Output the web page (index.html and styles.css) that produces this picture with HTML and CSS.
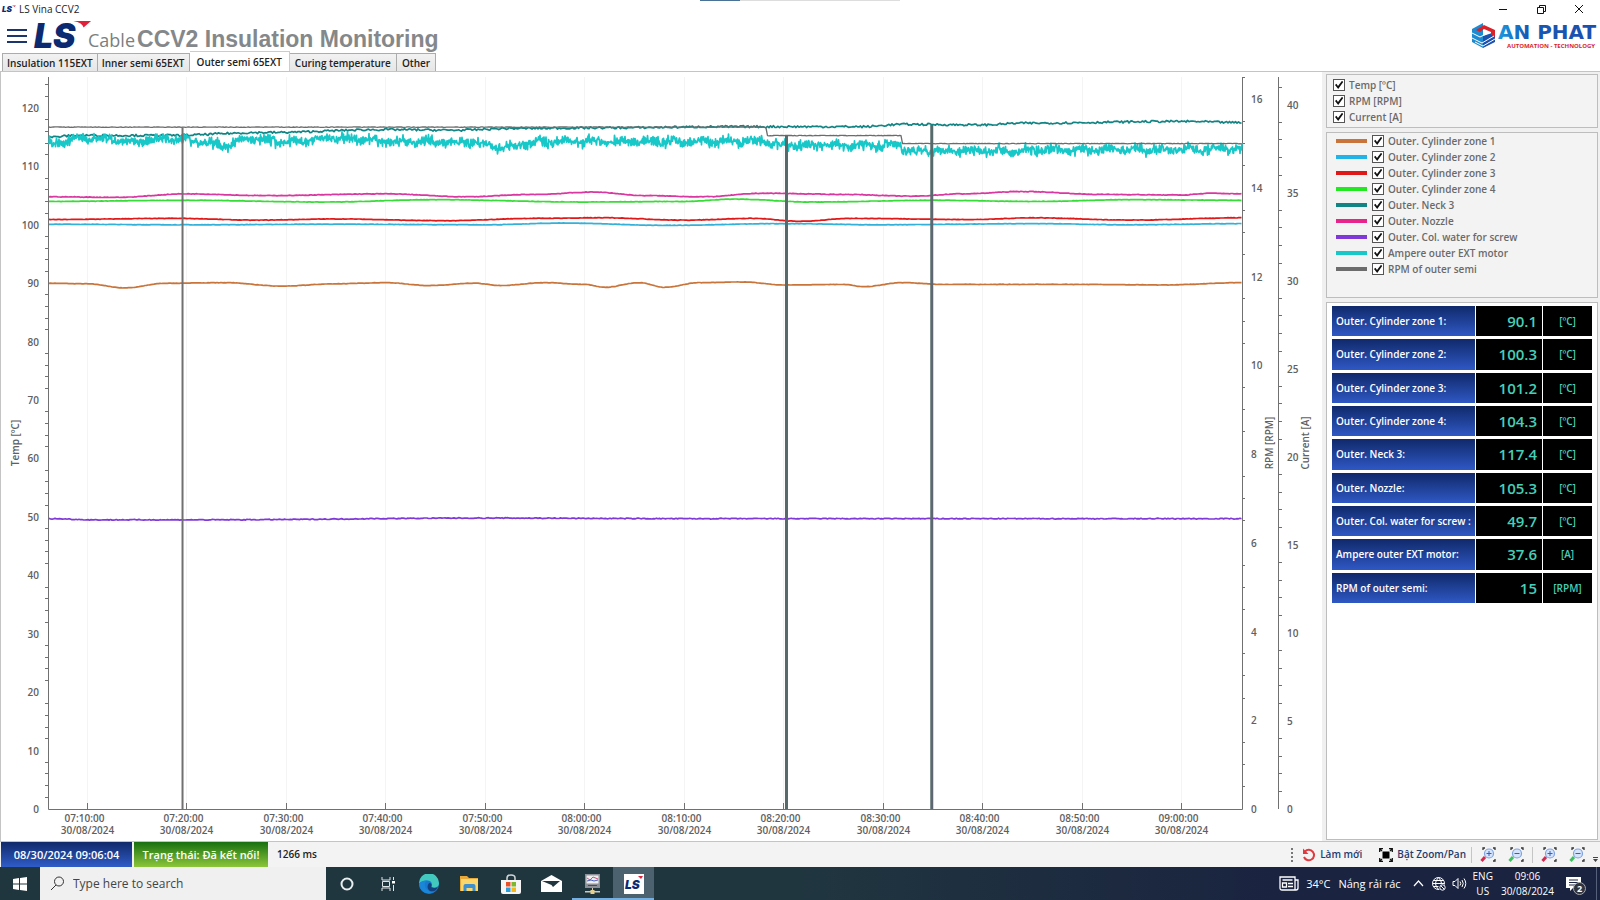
FILE: index.html
```html
<!DOCTYPE html>
<html lang="vi">
<head>
  <meta charset="UTF-8" />
  <meta name="viewport" content="width=device-width, initial-scale=1.0"/>
  <title>LS Vina CCV2</title>
  <link rel="stylesheet" href="styles.css">
</head>
<body>
  <div class="share-strip"></div>

  <div class="titlebar">
    <svg class="title-logo" viewBox="0 0 62 32">
      <text class="ls-text" x="0" y="29">LS</text>
      <path d="M43 0h19l-8 7q-1-5-11-7z" fill="#e2203c"/>
    </svg>
    <span class="title-text">LS Vina CCV2</span>
    <div class="window-buttons">
      <button aria-label="Minimize"><svg width="10" height="10" viewBox="0 0 10 10"><path d="M1 5.500h8"/></svg></button>
      <button aria-label="Restore"><svg width="10" height="10" viewBox="0 0 10 10"><path d="M1.500 3.500h6v6h-6zM3.500 3.500v-2h6v6h-2"/></svg></button>
      <button aria-label="Close"><svg width="10" height="10" viewBox="0 0 10 10"><path d="M1 1l8 8M9 1l-8 8"/></svg></button>
    </div>
  </div>

  <header class="header">
    <button class="menu-btn" aria-label="Menu"><i></i><i></i><i></i></button>
    <svg class="main-logo" viewBox="0 0 62 32">
      <text class="ls-text" x="0" y="29">LS</text>
      <path d="M42 0h19l-8 7q-1-5-11-7z" fill="#e2203c"/>
    </svg>
    <span class="cable">Cable</span>
    <h1>CCV2 Insulation Monitoring</h1>
    <svg class="anphat" width="129" height="30" viewBox="0 0 129 30">
      <defs>
        <linearGradient id="blue" x1="0" x2="1"><stop offset="0" stop-color="#1b9be0"/><stop offset=".3" stop-color="#1659b4"/><stop offset="1" stop-color="#1b4fae"/></linearGradient>
      </defs>
      <path d="M12 2L1 8v13l11 6V15z" fill="#1c8bd2"/>
      <path d="M12 15l12-4v10l-12 6z" fill="#1a52ae"/>
      <path d="M5 9l8-5 11 5v7l-4-2v-3l-7-3-4 3z" fill="#d8232a"/>
      <path d="M1 12l8 4 8-4M1 17l10 5 12-7M4 21l8 4 12-7" fill="none" stroke="#fff" stroke-width="1"/>
      <text x="27" y="18" class="anphat-name">AN PHAT</text>
      <text x="36" y="27" class="anphat-sub">AUTOMATION - TECHNOLOGY</text>
    </svg>
  </header>

  <nav class="tabs">
    <button>Insulation 115EXT</button>
    <button>Inner semi 65EXT</button>
    <button class="active">Outer semi 65EXT</button>
    <button>Curing temperature</button>
    <button>Other</button>
  </nav>

  <main class="content">
    <svg id="chart" class="chart"></svg>

    <aside class="side">
      <div class="panel axes">
        <label><input type="checkbox" checked>Temp [ºC]</label>
        <label><input type="checkbox" checked>RPM [RPM]</label>
        <label><input type="checkbox" checked>Current [A]</label>
      </div>
      <div class="panel legend" id="legend"></div>
      <div class="panel readings">
        <table>
          <tbody id="readings"></tbody>
        </table>
      </div>
    </aside>
  </main>

  <footer class="status">
    <span class="clock">08/30/2024 09:06:04</span>
    <span class="state">Trạng thái: Đã kết nối!</span>
    <span class="ping">1266 ms</span>
    <div class="tools">
      <i class="grip"></i>
      <button><svg width="14" height="14" viewBox="0 0 14 14"><path d="M3 3.500A5.200 5.200 0 1 1 2 9" fill="none" stroke="#e03a3e" stroke-width="2"/><path d="M1 .5v5.500h5.500z" fill="#e03a3e"/></svg>Làm mới</button>
      <button class="zoom-toggle"><svg width="14" height="14" viewBox="0 0 14 14"><path d="M3.500 3.500h7v7h-7z"/><path d="M.7 4V.7H4M10 .7h3.300V4M13.300 10v3.300H10M4 13.300H.7V10M1 1l2 2M13 1l-2 2M1 13l2-2M13 13l-2-2" fill="none" stroke="#111" stroke-width="1.300"/></svg>Bật Zoom/Pan</button>
      <i class="sep"></i>
      <button class="mag" aria-label="Zoom in X"><svg width="16" height="16" viewBox="0 0 16 16"><use href="#mag"/><path d="M6.500 6.500h5M9 4v5" stroke="#3260c0"/><path d="M5 10l-3.500 4" stroke="#d42a50" stroke-width="3"/></svg></button>
      <button class="mag" aria-label="Zoom out X"><svg width="16" height="16" viewBox="0 0 16 16"><use href="#mag"/><path d="M6.500 6.500h5" stroke="#3260c0"/><path d="M5 10l-3.500 4" stroke="#3fc060" stroke-width="3"/></svg></button>
      <i class="sep"></i>
      <button class="mag" aria-label="Zoom in Y"><svg width="16" height="16" viewBox="0 0 16 16"><use href="#mag"/><path d="M6.500 6.500h5M9 4v5" stroke="#3260c0"/><path d="M5 10l-3.500 4" stroke="#d42a50" stroke-width="3"/></svg></button>
      <button class="mag" aria-label="Zoom out Y"><svg width="16" height="16" viewBox="0 0 16 16"><use href="#mag"/><path d="M6.500 6.500h5" stroke="#3260c0"/><path d="M5 10l-3.500 4" stroke="#3fc060" stroke-width="3"/></svg></button>
      <svg class="more" width="7" height="7" viewBox="0 0 7 7"><path d="M1 1h5v1H1zM1 3h5L3.500 6z" fill="#444"/></svg>
    </div>
  </footer>

  <div class="taskbar">
    <button class="start" aria-label="Start"><svg width="14" height="14" viewBox="0 0 14 14"><path d="M0 2l6-.9v5.500H0zM7 1l7-1v6.600H7zM0 7.500h6V13l-6-.9zM7 7.500h7V14l-7-1z" fill="#fff"/></svg></button>
    <label class="search">
      <svg width="15" height="15" viewBox="0 0 15 15"><circle cx="9" cy="5.500" r="4.500"/><path d="M6 9l-5 5"/></svg>
      <input type="text" placeholder="Type here to search" aria-label="Search">
    </label>
    <div class="apps">
      <button aria-label="Cortana"><svg width="14" height="14" viewBox="0 0 14 14"><circle cx="7" cy="7" r="5.500" fill="none" stroke="#e8eef0" stroke-width="2"/></svg></button>
      <button aria-label="Task view"><svg width="16" height="14" viewBox="0 0 16 14"><path d="M2 0v3h8V0M2 14v-3h8v3M2.500 4.500h7v5h-7zM13.500 0v3M13.500 8v6" fill="none" stroke="#dfe6e8"/><path d="M12 4h3v2.500h-3z" fill="#fff"/></svg></button>
      <button aria-label="Edge"><svg width="20" height="20" viewBox="0 0 20 20"><circle cx="10" cy="10" r="10" fill="#1a78cf"/><path d="M0 9.500A10 10 0 0 1 20 9c0 3.500-2.500 4.500-5 4.500-2 0-3-.8-2.500-1.500C14 9 11.500 6.500 8.500 6.500 4.500 6.500 1 8 0 9.500z" fill="#42c8bd"/><path d="M9 6.500C4 7 4.500 17 14 18.500A10 10 0 0 1 0 10C1 7.500 5 6 9 6.500z" fill="#1a86d8"/><path d="M12.500 12c-.8 1 .5 2 2.500 2 1.500 0 3-.4 3.800-1-1 3-3.300 4.700-6.300 4.300C8 16.700 7.500 11 10.500 8.700c1.500.3 2.600 1.800 2 3.300z" fill="#11427f"/></svg></button>
      <button aria-label="File Explorer"><svg width="19" height="17" viewBox="0 0 19 17"><path d="M0 1h7l2 2h9v13H0z" fill="#e9a93a"/><path d="M1 4h17v12H1z" fill="#fbd66c"/><path d="M3.500 16v-5q0-2 2-2h8q2 0 2 2v5h-3v-3h-6v3z" fill="#3e8fd0"/></svg></button>
      <button aria-label="Store"><svg width="20" height="20" viewBox="0 0 20 20"><path d="M6 7V4q0-3 4-3t4 3v3" fill="none" stroke="#cfd6d8" stroke-width="1.500"/><path d="M0 6h20v12q0 2-2 2H2q-2 0-2-2z" fill="#f5f5f5"/><path d="M5 8h4.500v4.500H5z" fill="#e8502a"/><path d="M10.500 8H15v4.500h-4.500z" fill="#7cb82f"/><path d="M5 13.500h4.500V18H5z" fill="#2a9fdc"/><path d="M10.500 13.500H15V18h-4.500z" fill="#f5b71c"/></svg></button>
      <button aria-label="Mail"><svg width="21" height="17" viewBox="0 0 21 17"><path d="M0 6L10.500 0 21 6v11H0z" fill="#fff"/><path d="M1 6h18l-7 6-1.500-2z" fill="#20363f"/></svg></button>
      <button class="running" aria-label="Remote monitor"><svg width="15" height="20" viewBox="0 0 15 20"><path d="M0 0h15v14H0z" fill="#8d8f98"/><path d="M1.500 1.500h12v8h-12z" fill="#eee"/><path d="M2 4l3 2 3-3 5 2" fill="none" stroke="#d05080"/><path d="M2 7l4-1 3 1 4-1" fill="none" stroke="#4a62c0"/><path d="M3 11.500h9" stroke="#4b4d55"/><path d="M7 14h1v3H7zM0 17h15v1.500H0z" fill="#cfc9bb"/><path d="M5.500 16h4v4h-4z" fill="#e6cf8c"/></svg></button>
      <button class="running current" aria-label="LS Vina CCV2"><svg width="20" height="20" viewBox="0 0 20 20"><path d="M0 0h20v20H0z" fill="#fff"/><text x="1" y="15" class="ls-small">LS</text><path d="M14 2h5l-2 3z" fill="#e2203c"/></svg></button>
    </div>
    <div class="tray">
      <svg width="20" height="15" viewBox="0 0 20 15"><path d="M1 1h15v13H3q-2 0-2-2zM16 4h3v8q0 2-2 2h-2M3.500 4h10M3.500 7h4v4h-4zM9 7.500h5M9 10.500h5" fill="none" stroke="#fff" stroke-width="1.300"/></svg>
      <span class="temp">34°C</span>
      <span class="weather">Nắng rải rác</span>
      <svg class="chev" width="11" height="7" viewBox="0 0 11 7"><path d="M1 6l4.500-5L10 6" fill="none" stroke="#fff" stroke-width="1.200"/></svg>
      <svg class="globe" width="14" height="14" viewBox="0 0 14 14"><g fill="none" stroke="#fff"><circle cx="6.500" cy="6.500" r="6"/><path d="M.5 6.500h12M6.500.5q-6 6 0 12M6.500.5q6 6 0 12M1.500 3.500h10M1.500 9.500h5"/></g><circle cx="10.500" cy="10.500" r="3.500" fill="#1a2340"/><circle cx="10.500" cy="10.500" r="2.700" fill="none" stroke="#fff"/><path d="M9 9l3 3" stroke="#fff"/></svg>
      <svg class="vol" width="15" height="13" viewBox="0 0 15 13"><path d="M1 4.500h2l3-3v10l-3-3H1zM8 4.500q1.500 2 0 4M10 3q2.500 3.500 0 7M12 1.500q3.500 5 0 10" fill="none" stroke="#fff"/></svg>
      <span class="two lang">ENG<br>US</span>
      <span class="two time">09:06<br>30/08/2024</span>
      <span class="notif"><svg width="15" height="15" viewBox="0 0 15 15"><path d="M0 1h15v11H7l-3 3v-3H0z" fill="#fff"/><path d="M3 4h9M3 6.500h9M3 9h6" stroke="#1a2340"/></svg><b>2</b></span>
    </div>
  </div>

  <svg class="defs" width="0" height="0">
    <g id="mag">
      <path d="M3 3V1h2M13 1h2v2M15 12v2h-2" fill="none" stroke="#333" stroke-width="1.300"/>
      <circle cx="9" cy="6.500" r="4.500" fill="#d5e4fa" stroke="#7fa3e0" stroke-width="1.200"/>
    </g>
  </svg>

  <script src="chart.js"></script>
</body>
</html>
```
FILE: styles.css
```css
* {
  box-sizing: border-box;
}

body {
  margin: 0;
  height: 100vh;
  display: flex;
  flex-direction: column;
  background-color: #fff;
  color: #222;
  font-family: "Open Sans", "Noto Sans", sans-serif;
  font-size: 11px;
  overflow: hidden;
}

button {
  font: inherit;
  color: inherit;
  background: none;
  border: none;
  padding: 0;
}

.share-strip {
  position: absolute;
  top: 0;
  left: 700px;
  width: 200px;
  height: 1px;
  background: linear-gradient(90deg, #4a7296 20%, #ddd 20%);
}

.defs {
  position: absolute;
}

/* title bar */
.titlebar {
  height: 18px;
  display: flex;
  align-items: center;
  padding: 0 2px;
}

.title-logo {
  width: 14px;
  height: 10px;
  overflow: visible;
}

.title-text {
  margin-left: 3px;
  font-size: 10px;
  line-height: 18px;
}

.window-buttons {
  margin-left: auto;
  display: flex;
}

.window-buttons button {
  width: 38px;
  height: 18px;
}

.window-buttons path {
  fill: none;
  stroke: #111;
}

.ls-text {
  font: italic 900 36px Inter, sans-serif;
  fill: #0c2a72;
}

.ls-small {
  font: italic 900 12px Inter, sans-serif;
  fill: #0c2a72;
}

/* header */
.header {
  height: 34px;
  display: flex;
  align-items: center;
  padding: 1px 0 0 7px;
}

.menu-btn {
  width: 20px;
  display: flex;
  flex-direction: column;
  gap: 4px;
}

.menu-btn i {
  height: 2px;
  background-color: #1b356e;
}

.main-logo {
  width: 58px;
  height: 30px;
  margin-left: 7px;
  overflow: visible;
}

.cable {
  margin: 8px 2px 0 -4px;
  font-size: 18px;
  line-height: 24px;
  color: #7a7f82;
}

h1 {
  margin: 6px 0 0;
  font: bold 23px/26px "Liberation Sans", Arial, sans-serif;
  color: #84888a;
}

.anphat {
  margin-left: auto;
  overflow: visible;
}

.anphat-name {
  font: bold 20px "DejaVu Sans", sans-serif;
  fill: url(#blue);
}

.anphat-sub {
  font: 700 6px "Open Sans", sans-serif;
  fill: #d8232a;
}

/* tabs */
.tabs {
  height: 19px;
  display: flex;
  align-items: flex-end;
  padding-left: 2px;
}

.tabs button {
  height: 18px;
  padding: 0 4px;
  border: 1px solid #acacac;
  border-left-width: 0;
  border-bottom: none;
  background: linear-gradient(#f2f2f2, #e6e6e6);
  font-size: 10px;
  font-weight: 600;
}

.tabs button:first-child {
  border-left-width: 1px;
}

.tabs button.active {
  height: 20px;
  padding: 0 7px;
  border-color: #ccc;
  background: #fff;
}

.tabs button.active ~ button {
  padding: 0 5px;
}

/* content */
.content {
  flex: 1;
  min-height: 0;
  display: flex;
  border: 1px solid #c4c4c4;
  border-right: none;
}

.chart {
  flex: 1;
  min-width: 0;
  height: 100%;
}

.chart text {
  fill: #606060;
  font-size: 10px;
  font-weight: 600;
}

.chart .axis {
  fill: none;
  stroke: #707070;
}

.chart .grid {
  fill: none;
  stroke: #f4f4f4;
}

.chart .line {
  fill: none;
  stroke-linejoin: round;
}

.side {
  width: 278px;
  padding: 2px 2px 1px 4px;
  display: flex;
  flex-direction: column;
  gap: 4px;
  background-color: #f0f0f0;
}

.panel {
  border: 1px solid #bdbdbd;
  background-color: #f3f3f3;
  color: #6a6a6a;
  font-size: 10px;
  font-weight: 600;
}

.panel label {
  height: 16px;
  display: flex;
  align-items: center;
}

.panel input {
  appearance: none;
  width: 12px;
  height: 12px;
  margin: 0 4px 0 0;
  border: 1px solid #555;
  background-color: #fff;
}

.panel input:checked::before {
  content: "";
  display: block;
  width: 10px;
  height: 10px;
  background-color: #111;
  clip-path: polygon(10% 50%, 24% 38%, 40% 60%, 80% 8%, 92% 20%, 42% 90%);
}

.axes {
  padding: 2px 6px;
}

.legend {
  height: 166px;
  padding: 0 9px;
}

.swatch {
  width: 31px;
  height: 4px;
  margin-right: 5px;
}

.readings {
  flex: 1;
  background-color: #fff;
}

.readings table {
  width: 262px;
  height: 303px;
  margin-left: 4px;
  border-spacing: 1px 3px;
}

.readings th {
  width: 143px;
  padding: 0 4px;
  background: linear-gradient(#10296a, #2f58c4);
  color: #fff;
  font-weight: 600;
  text-align: left;
  white-space: nowrap;
}

.readings td {
  padding: 0;
  background-color: #000;
  color: #45d0b8;
  text-align: center;
}

.readings td.value {
  width: 66px;
  padding-right: 5px;
  font-size: 15px;
  font-weight: 600;
  line-height: 18px;
  text-align: right;
}

/* status bar */
.status {
  height: 25px;
  display: flex;
  align-items: stretch;
  gap: 2px;
  padding-left: 1px;
  background-color: #f3f3f3;
  line-height: 25px;
  font-weight: 600;
}

.clock,
.state {
  width: 131px;
  color: #fff;
  text-align: center;
  white-space: nowrap;
  background: linear-gradient(#10296a, #2f5cc8);
}

.state {
  width: 134px;
  background: linear-gradient(#17700f, #8cc63a);
}

.ping {
  margin-left: 7px;
  font-size: 10px;
}

.tools {
  margin-left: auto;
  display: flex;
  align-items: center;
  padding-right: 1px;
  color: #1d3c70;
  font-size: 10px;
}

.tools button {
  display: flex;
  align-items: center;
  gap: 4px;
}

.grip {
  height: 14px;
  margin-right: 9px;
  border-left: 2px dotted #777;
}

.zoom-toggle {
  margin-left: 17px;
}

.sep {
  width: 1px;
  height: 16px;
  margin: 0 8px 0 5px;
  background-color: #c5c5c5;
}

.tools .mag + .mag {
  margin-left: 12px;
}

.mag + .sep {
  margin-left: 8px;
}

.more {
  align-self: flex-end;
  margin: 0 0 4px 7px;
}

/* taskbar */
.taskbar {
  height: 33px;
  display: flex;
  background: linear-gradient(90deg, #20363f 50%, #1a2340 80%);
  color: #fff;
}

.start {
  width: 40px;
  display: flex;
  align-items: center;
  justify-content: center;
}

.search {
  width: 286px;
  display: flex;
  align-items: center;
  padding-left: 10px;
  background-color: #f0f0f0;
}

.search svg {
  fill: none;
  stroke: #333;
}

.search input {
  flex: 1;
  margin-left: 6px;
  border: none;
  background: none;
  font: 12px "Open Sans", sans-serif;
}

.search input::placeholder {
  color: #444;
  opacity: 1;
}

.apps {
  display: flex;
}

.apps button {
  width: 41px;
  display: flex;
  align-items: center;
  justify-content: center;
  border-bottom: 2px solid transparent;
  border-top: 2px solid transparent;
}

.apps .running {
  border-bottom-color: #76b0e0;
}

.apps .current {
  background-color: #4c626e;
}

.tray {
  margin-left: auto;
  display: flex;
  align-items: center;
  padding-right: 3px;
  font-size: 11px;
}

.temp {
  margin-left: 7px;
}

.weather {
  margin-left: 8px;
}

.chev {
  margin-left: 12px;
}

.globe {
  margin-left: 8px;
}

.vol {
  margin-left: 6px;
}

.two {
  font-size: 10px;
  line-height: 15px;
  text-align: center;
}

.lang {
  margin-left: 6px;
}

.time {
  margin-left: 8px;
}

.notif {
  position: relative;
  margin-left: 12px;
  padding-right: 15px;
  border-right: 1px solid #56607a;
  height: 33px;
  display: flex;
  align-items: center;
}

.notif b {
  position: absolute;
  left: 7px;
  top: 15px;
  width: 13px;
  height: 13px;
  border: 1px solid #aaa;
  border-radius: 50%;
  background-color: #30343f;
  font-size: 9px;
  line-height: 11px;
  text-align: center;
}
```
FILE: chart.js
```js
const NS = "http://www.w3.org/2000/svg";

// minutes after 07:00, the window is two hours
const START = 6.08;
const SPAN = 120;

// value at the top of each scale
const TOP = { temp: 125.3, rpm: 16.5, amp: 41.57 };

const series = [
  { name: "Outer. Cylinder zone 1", color: "#c8743a", axis: "temp", noise: 0.05, value: "90.1", unit: "[ºC]",
    points: [[6, 90], [10, 89.9], [13.8, 89.2], [18, 90], [24, 90.1], [29.5, 89.5], [35, 89.9], [40, 90.1], [44.5, 89.6], [49, 90], [51.5, 89.6], [56, 90.1], [60, 89.8], [62, 89.3], [65.5, 90.1], [68, 89.3], [71.5, 90.1], [76, 90.2], [80, 89.7], [86, 89.8], [88, 89.4], [92, 90.1], [96, 89.8], [110, 89.8], [118, 89.7], [126.1, 90.1]] },
  { name: "Outer. Cylinder zone 2", color: "#22b4e8", line: "#35b0d8", axis: "temp", noise: 0.05, value: "100.3", unit: "[ºC]",
    points: [[6, 100.1], [20, 100], [35, 100.1], [50, 100], [58, 100.3], [68, 99.9], [80, 100.2], [90, 100], [105, 100.2], [115, 100], [126.1, 100.2]] },
  { name: "Outer. Cylinder zone 3", color: "#e01818", axis: "temp", noise: 0.06, value: "101.2", unit: "[ºC]",
    points: [[6, 100.9], [19, 101.1], [27, 100.8], [35, 101], [46, 100.7], [55, 101.1], [62, 101.2], [70, 100.8], [77, 101.1], [81.5, 100.6], [87, 101.1], [99, 100.9], [105, 101.2], [115, 100.8], [126.1, 101.2]] },
  { name: "Outer. Cylinder zone 4", color: "#22e822", line: "#38dc38", axis: "temp", noise: 0.05, value: "104.3", unit: "[ºC]",
    points: [[6, 104], [20, 104.2], [34, 103.9], [45, 104.3], [60, 103.9], [70, 104], [75, 104.4], [83, 103.9], [95, 104.2], [105, 104], [115, 104.3], [126.1, 104.2]] },
  { name: "Outer. Neck 3", color: "#138484", axis: "temp", noise: 0.3, value: "117.4", unit: "[ºC]",
    points: [[6, 115], [9, 115.3], [18, 115.3], [28, 115.8], [40, 116.3], [47, 116.2], [53, 116.5], [62, 116.6], [75, 116.8], [88, 116.8], [92, 117.2], [100, 117.1], [104, 117.4], [120, 117.7], [126.1, 117.5]] },
  { name: "Outer. Nozzle", color: "#e8248c", line: "#d838a0", axis: "temp", noise: 0.08, value: "105.3", unit: "[ºC]",
    points: [[6, 104.8], [13, 104.7], [20, 105.3], [28, 105], [40, 105.3], [48, 104.8], [55, 105.2], [61, 105.6], [66, 105], [72, 104.8], [78, 105.4], [86, 105.2], [93, 104.9], [98, 105.3], [104, 105.7], [112, 105.2], [120, 105.1], [123, 105.4], [126.1, 105.3]] },
  { name: "Outer. Col. water for screw", label: "Outer. Col. water for screw :", color: "#8038d8", axis: "temp", noise: 0.12, value: "49.7", unit: "[ºC]",
    points: [[6, 49.7], [11, 49.5], [22, 49.5], [50, 49.8], [70, 49.7], [90, 49.7], [126.1, 49.7]] },
  { name: "Ampere outer EXT motor", color: "#18c8c8", axis: "amp", noise: 0.24, value: "37.6", unit: "[A]",
    points: [[6, 37.8], [10, 38.1], [15, 37.9], [18, 38.1], [24, 37.7], [26, 38.1], [30, 37.9], [35, 38.1], [40, 37.9], [48, 37.9], [52, 37.6], [56, 37.9], [78, 37.9], [80, 37.7], [91.8, 37.7], [91.9, 37.4], [105, 37.4], [126.1, 37.5]] },
  { name: "RPM of outer semi", color: "#6c6c6c", axis: "rpm", noise: 0.01, value: "15", unit: "[RPM]",
    points: [[6, 15.37], [78.2, 15.37], [78.4, 15.18], [91.8, 15.18], [91.9, 15], [126.1, 15]] }
];

const chart = document.getElementById("chart");
let seed = 7;

function random() {
  seed = (seed * 16807) % 2147483647;
  return seed / 2147483647 - 0.5;
}

function add(tag, attrs, text) {
  const el = document.createElementNS(NS, tag);
  for (const key in attrs) el.setAttribute(key, attrs[key]);
  if (text) el.textContent = text;
  chart.appendChild(el);
}

function valueAt(points, t) {
  let i = 0;
  while (i < points.length - 2 && points[i + 1][0] < t) i++;
  const [t0, v0] = points[i];
  const [t1, v1] = points[i + 1];
  const k = (1 - Math.cos(Math.PI * Math.min(1, Math.max(0, (t - t0) / (t1 - t0))))) / 2;
  return v0 + (v1 - v0) * k;
}

function drawChart() {
  chart.innerHTML = "";
  seed = 7;
  const left = 47, top = 5;
  const right = chart.clientWidth - 80;
  const bottom = chart.clientHeight - 32;
  const x = t => left + (t - START) / SPAN * (right - left);
  const y = (v, axis) => bottom - v / TOP[axis] * (bottom - top);
  const snap = n => Math.floor(n) + 0.5;

  // time axis
  let grid = "", ticks = `M${left + 0.5} ${top}V${bottom + 0.5}H${right + 0.5}V${top}`;
  for (let t = 10; t <= 120; t += 10) {
    const px = snap(x(t));
    grid += `M${px} ${top}V${bottom}`;
    ticks += `M${px} ${bottom}v-6`;
    const hh = "0" + (7 + Math.floor(t / 60));
    const mm = String(t % 60).padStart(2, "0");
    add("text", { x: px - 3, y: bottom + 13, "text-anchor": "middle" }, `${hh}:${mm}:00`);
    add("text", { x: px, y: bottom + 25, "text-anchor": "middle" }, "30/08/2024");
  }
  add("path", { class: "grid", d: grid });

  // value axes
  for (let v = 0; v < TOP.temp; v += 2) {
    const py = y(v, "temp");
    if (v % 10) ticks += `M${left} ${snap(py)}h-3`;
    else add("text", { x: 38, y: py + 4, "text-anchor": "end" }, String(v));
  }
  for (let v = 0; v <= TOP.rpm; v += 0.5) {
    const py = y(v, "rpm");
    if (v % 2) ticks += `M${right} ${snap(py)}h3`;
    else add("text", { x: right + 9, y: py + 4 }, String(v));
  }
  const ampX = right + 36;
  ticks += `M${ampX + 0.5} ${top}V${bottom}`;
  for (let v = 0; v < TOP.amp; v++) {
    const py = y(v, "amp");
    if (v % 5) ticks += `M${ampX} ${snap(py)}h4`;
    else add("text", { x: ampX + 9, y: py + 4 }, String(v));
  }
  const mid = (top + bottom) / 2;
  [["Temp [ºC]", 18], ["RPM [RPM]", right + 31], ["Current [A]", right + 67]].forEach(([name, tx]) => {
    add("text", { x: 0, y: 0, "text-anchor": "middle", transform: `translate(${tx} ${mid}) rotate(-90)` }, name);
  });
  add("path", { class: "axis", d: ticks });

  // series
  series.forEach(s => {
    let d = "";
    const step = s.axis === "amp" ? 0.5 : 1.5;
    for (let px = left + 1; px <= right; px += step) {
      const t = START + (px - left) / (right - left) * SPAN;
      const wave = s.axis === "amp" ? Math.sin(t * 2.3) * 0.08 : 0;
      const r = s.axis === "amp" ? random() + random() + random() : random();
      const v = valueAt(s.points, t) + wave + r * s.noise * 1.2;
      d += `${d ? "L" : "M"}${px.toFixed(1)} ${y(v, s.axis).toFixed(1)}`;
    }
    add("path", { class: "line", d, stroke: s.line || s.color, "stroke-width": s.axis === "rpm" ? 1.3 : 1.7 });
  });

  // drops to zero
  add("path", { class: "axis", "stroke-width": 2, d: `M${x(19.6)} ${y(15.37, "rpm")}V${bottom}` });
  add("path", { class: "line", stroke: "#566a6c", "stroke-width": 3, d: `M${x(80.3)} ${y(15.18, "rpm")}V${bottom}M${x(94.9)} ${y(117.1, "temp")}V${bottom}` });
  add("path", { class: "line", stroke: "#7a5a80", "stroke-width": 1, d: `M${x(94.9)} ${y(105, "temp")}V${bottom}` });
}

document.getElementById("legend").innerHTML = series.map(s =>
  `<label><span class="swatch" style="background-color:${s.color}"></span><input type="checkbox" checked>${s.name}</label>`
).join("");

document.getElementById("readings").innerHTML = series.map(s =>
  `<tr><th scope="row">${s.label || s.name + ":"}</th><td class="value">${s.value}</td><td>${s.unit}</td></tr>`
).join("");

drawChart();
window.addEventListener("resize", drawChart);
```
